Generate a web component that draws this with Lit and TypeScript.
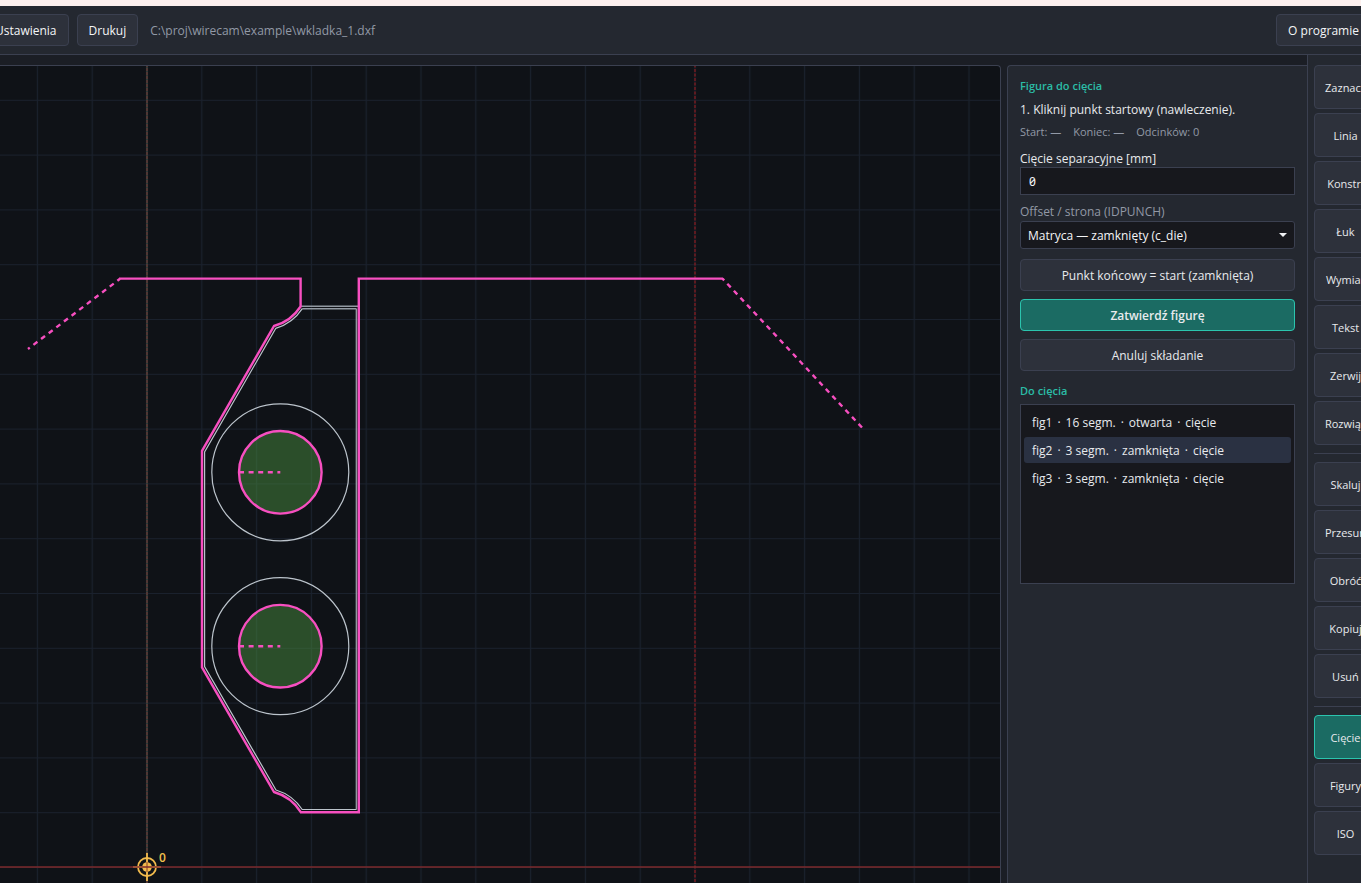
import { LitElement, html, css, svg } from "lit";
import { customElement, state } from "lit/decorators.js";

interface Figure {
  name: string;
  segments: number;
  kind: string;
}

const TOOL_GROUPS = [
  ["Zaznacz", "Linia", "Konstr.", "Łuk", "Wymiar", "Tekst", "Zerwij", "Rozwiąż"],
  ["Skaluj", "Przesuń", "Obróć", "Kopiuj", "Usuń"],
  ["Cięcie", "Figury", "ISO"],
];

const FIGURES: Figure[] = [
  { name: "fig1", segments: 16, kind: "otwarta" },
  { name: "fig2", segments: 3, kind: "zamknięta" },
  { name: "fig3", segments: 3, kind: "zamknięta" },
];

/* Drawing surface: grid, axes, part outline and wire paths. */
@customElement("cam-canvas")
export class CamCanvas extends LitElement {
  static styles = css`
    :host { display: block; overflow: hidden; background: #0f1217; }
    .surface { display: block; width: 100%; height: 100%; }
    .grid { stroke: #1a212d; stroke-width: 1.2; fill: none; }
    .axis-base { stroke: #2c3a38; stroke-width: 2; }
    .axis-red { stroke: #7d2a2c; stroke-width: 1.4; }
    .axis-dash { stroke: #a3322c; stroke-width: 1; stroke-opacity: 0.6; stroke-dasharray: 3 1; }
    .limit { stroke: #7c1b20; stroke-width: 1.4; stroke-dasharray: 3 1.5; }
    .part { stroke: #bcc4cc; stroke-width: 1.2; fill: none; }
    .part-soft { stroke: #9299a2; stroke-width: 1.5; fill: none; }
    .wire { stroke: #f74fc0; stroke-width: 2.4; fill: none; stroke-linejoin: miter; }
    .lead { stroke: #f74fc0; stroke-width: 2.4; stroke-dasharray: 5 4.6; }
    .lead-out { stroke-dashoffset: 1.7; }
    .closed { fill: rgba(71, 138, 62, 0.5); }
    .origin { stroke: #f2bb4d; stroke-width: 1.8; fill: none; }
    .origin-dot { fill: #f2bb4d; }
    .origin-core { stroke: #a8632f; stroke-width: 1.4; }
    .origin-text { fill: #f2c14e; font: 600 12px "Open Sans", "Noto Sans", sans-serif; }
  `;

  private hole(cy: number) {
    return svg`
      <circle class="part" cx="280.3" cy=${cy} r="68.5"></circle>
      <circle class="wire closed" cx="280.3" cy=${cy} r="41.3"></circle>
      <line class="lead" x1="239" y1=${cy} x2="280.3" y2=${cy}></line>`;
  }

  render() {
    return html`
      <svg class="surface" role="img" aria-label="Rysunek części">
        <defs>
          <pattern id="grid" width="54.8" height="54.8" patternUnits="userSpaceOnUse" x="119.6" y="840.1">
            <path class="grid" d="M27.4 0V54.8M0 27.4H54.8"></path>
          </pattern>
        </defs>
        <g transform="translate(17 -66)">
          <rect x="-20" y="60" width="4000" height="3000" fill="url(#grid)"></rect>
          <line class="axis-base" x1="147" y1="60" x2="147" y2="3000"></line>
          <line class="axis-dash" x1="147" y1="60" x2="147" y2="3000"></line>
          <line class="limit" x1="695" y1="60" x2="695" y2="3000"></line>

          <path class="part-soft" d="M301 306.3H358M302.3 308.7H356.4M356.4 308.7V809.5"></path>
          <path class="part" d="M302.3 308.7A48 48 0 0 1 275.7 328.4L204.6 452V666.6L276 790A48 48 0 0 1 302.2 809.5H356.4"></path>
          ${this.hole(472.3)} ${this.hole(646.2)}
          <path class="wire" d="M119 278.6H300.6V306.5A46 46 0 0 1 274 326L202 450.8V667.4L274 792A46 46 0 0 1 300.8 812.2H358.8V278.6H723"></path>
          <line class="lead lead-out" x1="120" y1="278.8" x2="28" y2="349"></line>
          <line class="lead" x1="862" y1="427.5" x2="722.5" y2="278.6"></line>

          <path class="origin" d="M133 867H161M147 853V881"></path>
          <circle class="origin" cx="147" cy="867" r="9"></circle>
          <circle class="origin-dot" cx="147" cy="867" r="4.8"></circle>
          <path class="origin-core" d="M147 862V872"></path>
          <line class="axis-red" x1="-20" y1="867" x2="4000" y2="867"></line>
          <text class="origin-text" x="159" y="862">0</text>
        </g>
      </svg>`;
  }
}

/* Side panel: assembling one figure and the list of figures to cut. */
@customElement("cut-panel")
export class CutPanel extends LitElement {
  @state() private selected = 1;

  static styles = css`
    :host {
      display: flex; flex-direction: column; box-sizing: border-box;
      padding: 12px; background: #242830; color: #e8eaed;
      border: 1px solid #3b4050; border-width: 1px 0 0 1px; border-top-left-radius: 4px;
      font-size: 12px; line-height: 16px;
    }
    h2 { margin: 0; font-size: 11px; font-weight: 600; color: #2bbca6; line-height: 16px; }
    p { margin: 8px 0 6px; }
    .meta { display: flex; gap: 12px; font-size: 11px; color: #9299a6; margin-bottom: 10px; }
    label { display: block; padding-top: 1px; }
    .muted { color: #9299a6; padding-bottom: 1px; margin-top: 8px; }
    input, select {
      box-sizing: border-box; width: 100%; height: 28px; margin: 0; color: #f4f5f7;
      background-color: #17181d; border: 1px solid #3b4050; outline: none;
    }
    input { padding: 0 8px; font: 12px "Noto Sans", sans-serif; font-variant-numeric: slashed-zero; }
    select {
      appearance: none; padding: 2px 28px 0 7px; border-radius: 3px; font: inherit;
      background-image: url("data:image/svg+xml,%3Csvg xmlns='http://www.w3.org/2000/svg' width='8' height='4'%3E%3Cpath d='M0 0H8L4 4Z' fill='%23f0f1f3'/%3E%3C/svg%3E");
      background-size: 8px 4px; background-repeat: no-repeat; background-position: right 7px center;
    }
    .actions { display: grid; gap: 8px; margin: 10px 0 12px; }
    .action {
      height: 32px; padding: 1px 12px 0; font: inherit; color: #e8eaed;
      background: #2d313b; border: 1px solid #3b4050; border-radius: 4px;
    }
    .primary { font-weight: 600; background: #1b6b63; border-color: #2bc4ae; }
    .list {
      display: flex; flex-direction: column; gap: 2px; box-sizing: border-box; height: 180px;
      margin: 5px 0 0; padding: 4px 3px; list-style: none; overflow: auto;
      background: #17181d; border: 1px solid #3b4050;
    }
    .row {
      display: flex; gap: 5px; width: 100%; height: 26px; padding: 1px 8px 0; align-items: center;
      font: inherit; color: inherit; text-align: left; background: none; border: 0; border-radius: 3px;
    }
    .row.on { background: #2a3142; }
  `;

  render() {
    return html`
      <h2>Figura do cięcia</h2>
      <p>1. Kliknij punkt startowy (nawleczenie).</p>
      <div class="meta"><span>Start: —</span><span>Koniec: —</span><span>Odcinków: 0</span></div>
      <label for="sep">Cięcie separacyjne [mm]</label>
      <input id="sep" type="text" value="0" />
      <label class="muted" for="side">Offset / strona (IDPUNCH)</label>
      <select id="side"><option>Matryca — zamknięty (c_die)</option></select>
      <div class="actions">
        <button class="action">Punkt końcowy = start (zamknięta)</button>
        <button class="action primary">Zatwierdź figurę</button>
        <button class="action">Anuluj składanie</button>
      </div>
      <h2>Do cięcia</h2>
      <ul class="list">
        ${FIGURES.map((f, i) => html`
          <li>
            <button class="row ${i === this.selected ? "on" : ""}" @click=${() => (this.selected = i)}>
              <span>${f.name}</span><span>·</span><span>${f.segments} segm.</span><span>·</span><span>${f.kind}</span><span>·</span><span>cięcie</span>
            </button>
          </li>`)}
      </ul>`;
  }
}

@customElement("app-root")
export class AppRoot extends LitElement {
  @state() private tool = "Cięcie";

  static styles = css`
    :host {
      display: block; height: 100vh; overflow: hidden; background: #1b1e25; color: #e8eaed;
      font-family: "Open Sans", "Noto Sans", sans-serif; font-size: 12px; line-height: 16px;
    }
    /* The window content runs past both sides of the viewport. */
    .window {
      display: flex; flex-direction: column; box-sizing: border-box; height: 100%;
      margin: 0 -24px 0 -17px; border-top: 6px solid #fcf0ee;
    }
    .bar {
      display: flex; align-items: center; gap: 8px; padding: 8px 14px 8px 0;
      background: #242830; border-bottom: 1px solid #3b4050;
    }
    .btn {
      height: 32px; padding: 1px 11px 0; font: inherit; color: #f4f5f7; white-space: nowrap;
      background: #2d313b; border: 1px solid #3b4050; border-radius: 4px;
    }
    .path { flex: 1; padding: 1px 0 0 4px; color: #9299a6; }
    .main { display: flex; flex: 1; min-height: 0; }
    .work { display: flex; flex: 1; min-width: 0; gap: 6px; padding-top: 10px; }
    cam-canvas {
      flex: 1; min-width: 0; border: 1px solid #3b4050; border-width: 1px 1px 0 0;
      border-top-right-radius: 4px;
    }
    cut-panel { flex: 0 0 300px; }
    .rail {
      display: flex; flex-direction: column; gap: 4px; flex: 0 0 78px; box-sizing: border-box;
      padding: 10px 8px 0 6px; background: #242830; border-left: 1px solid #3b4050;
    }
    .tool {
      flex: 0 0 44px; padding: 1px 0 0; font: inherit; font-size: 11px; color: #e8eaed;
      background: #2d313b; border: 1px solid #3b4050; border-radius: 4px;
    }
    .tool.on { background: #1b6b63; border-color: #2bc4ae; }
    hr { width: 100%; height: 1px; margin: 4px 0; border: 0; background: #3b4050; }
  `;

  render() {
    return html`
      <div class="window">
        <header class="bar">
          <button class="btn">Ustawienia</button>
          <button class="btn">Drukuj</button>
          <span class="path">C:\\proj\\wirecam\\example\\wkladka_1.dxf</span>
          <button class="btn">O programie</button>
        </header>
        <div class="main">
          <main class="work">
            <cam-canvas></cam-canvas>
            <cut-panel></cut-panel>
          </main>
          <nav class="rail" aria-label="Narzędzia">
            ${TOOL_GROUPS.map((group, i) => html`
              ${i ? html`<hr />` : ""}
              ${group.map((name) => html`
                <button class="tool ${name === this.tool ? "on" : ""}" @click=${() => (this.tool = name)}>${name}</button>`)}
            `)}
          </nav>
        </div>
      </div>`;
  }
}
